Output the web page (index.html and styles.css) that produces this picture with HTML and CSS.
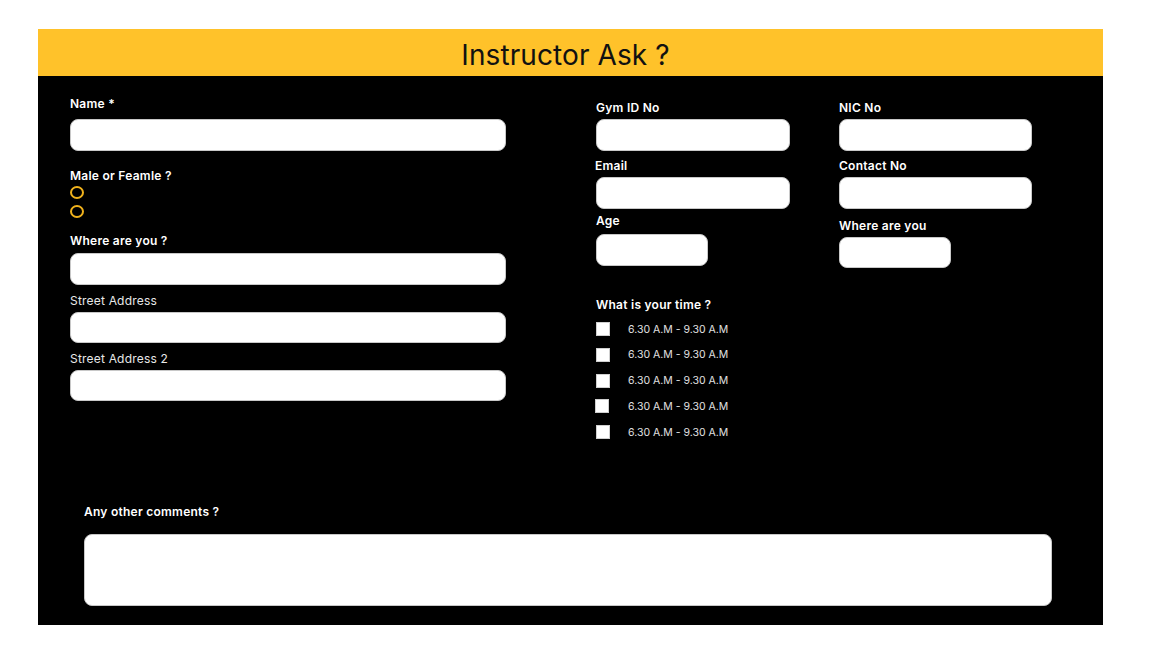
FILE: index.html
```html
<!DOCTYPE html>
<html lang="en">
<head>
<meta charset="utf-8">
<title>Instructor Ask ?</title>
<link rel="stylesheet" href="styles.css">
</head>
<body>
<div class="card">
  <header class="card-head"><h1 class="title">Instructor Ask ?</h1></header>
  <div class="card-body">
    <div class="top">
      <div class="col col-left">
        <label class="lbl lbl-name">Name *</label>
        <div class="field f-name"></div>
        <label class="lbl lbl-gender">Male or Feamle ?</label>
        <div class="radios">
          <span class="radio"></span>
          <span class="radio"></span>
        </div>
        <label class="lbl lbl-where">Where are you ?</label>
        <div class="field f-where"></div>
        <label class="sub lbl-street">Street Address</label>
        <div class="field f-street"></div>
        <label class="sub lbl-street2">Street Address 2</label>
        <div class="field f-street2"></div>
      </div>
      <div class="col col-mid">
        <label class="lbl lbl-gym">Gym ID No</label>
        <div class="field f-gym"></div>
        <label class="lbl lbl-email">Email</label>
        <div class="field f-email"></div>
        <label class="lbl lbl-age">Age</label>
        <div class="field small f-age"></div>
        <label class="lbl lbl-time">What is your time ?</label>
        <ul class="times">
          <li class="time"><span class="box"></span><span class="time-txt">6.30 A.M - 9.30 A.M</span></li>
          <li class="time"><span class="box"></span><span class="time-txt">6.30 A.M - 9.30 A.M</span></li>
          <li class="time"><span class="box"></span><span class="time-txt">6.30 A.M - 9.30 A.M</span></li>
          <li class="time"><span class="box shift"></span><span class="time-txt">6.30 A.M - 9.30 A.M</span></li>
          <li class="time"><span class="box"></span><span class="time-txt">6.30 A.M - 9.30 A.M</span></li>
        </ul>
      </div>
      <div class="col col-right">
        <label class="lbl lbl-nic">NIC No</label>
        <div class="field f-nic"></div>
        <label class="lbl lbl-contact">Contact No</label>
        <div class="field f-contact"></div>
        <label class="lbl lbl-where2">Where are you</label>
        <div class="field small f-where2"></div>
      </div>
    </div>
    <div class="comments">
      <label class="lbl lbl-comments">Any other comments ?</label>
      <div class="field area"></div>
    </div>
  </div>
</div>
</body>
</html>
```
FILE: styles.css
```css
* { box-sizing: border-box; }
html, body { margin: 0; padding: 0; background: #fff; }
body {
  font-family: Inter, "Liberation Sans", sans-serif;
  padding: 29px 0 0 38px;
}
.card {
  width: 1065px;
  background: #000;
}
.card-head {
  height: 47px;
  background: #ffc22a;
  display: flex;
  align-items: center;
  justify-content: center;
}
.title {
  margin: 0;
  font-size: 28px;
  font-weight: 400;
  color: #111;
  line-height: 1;
  padding-top: 4px;
  padding-right: 10px;
  letter-spacing: 0.1px;
}
.card-body {
  padding: 20px 51px 19px 32px;
}
.top {
  display: flex;
}
.col { display: flex; flex-direction: column; }
.col-left { width: 436px; }
.col-mid { width: 194px; margin-left: 90px; padding-top: 4px; }
.col-right { width: 193px; margin-left: 49px; padding-top: 4px; }

.lbl, .sub {
  display: block;
  font-size: 12px;
  line-height: 16px;
  height: 16px;
  color: #fff;
}
.lbl { font-weight: 600; letter-spacing: 0.25px; }
.sub { font-weight: 400; color: #e8e8e8; letter-spacing: 0.2px; }

.field {
  background: #fff;
  border: 1px solid #c8c8c8;
  border-radius: 8px;
  height: 32px;
}
.small { width: 112px; }

.f-name { margin-top: 7px; }
.lbl-gender { margin-top: 17px; }
.radios { display: flex; flex-direction: column; gap: 6px; margin-top: 2px; }
.radio {
  width: 14px; height: 13px;
  border: 2px solid #f0b21c;
  border-radius: 50%;
}
.lbl-where { margin-top: 15px; }
.f-where { margin-top: 4px; }
.lbl-street { margin-top: 8px; }
.f-street { margin-top: 3px; height: 31px; }
.lbl-street2 { margin-top: 8px; }
.f-street2 { margin-top: 3px; height: 31px; }

.f-gym { margin-top: 3px; }
.lbl-email { margin-top: 7px; margin-left: -1px; }
.f-email { margin-top: 3px; }
.lbl-age { margin-top: 4px; }
.f-age { margin-top: 5px; }
.lbl-time { margin-top: 31px; }
.times { list-style: none; margin: 8px 0 0; padding: 0; }
.time {
  display: flex;
  align-items: center;
  height: 16px;
  margin-bottom: 9.75px;
}
.time:last-child { margin-bottom: 0; }
.box {
  width: 14px; height: 14px;
  background: #fff;
  border: 1px solid #cfcfcf;
  flex: none;
}
.box.shift { margin-left: -1px; margin-right: 1px; }
.time-txt {
  margin-left: 18px;
  font-size: 10.5px;
  color: #e0e0e0;
}

.f-nic { margin-top: 3px; }
.lbl-contact { margin-top: 7px; }
.f-contact { margin-top: 3px; }
.lbl-where2 { margin-top: 9px; }
.f-where2 { margin-top: 3px; height: 31px; }

.comments { margin: 64px 0 0 14px; }
.area { margin-top: 14px; height: 72px; }
```
